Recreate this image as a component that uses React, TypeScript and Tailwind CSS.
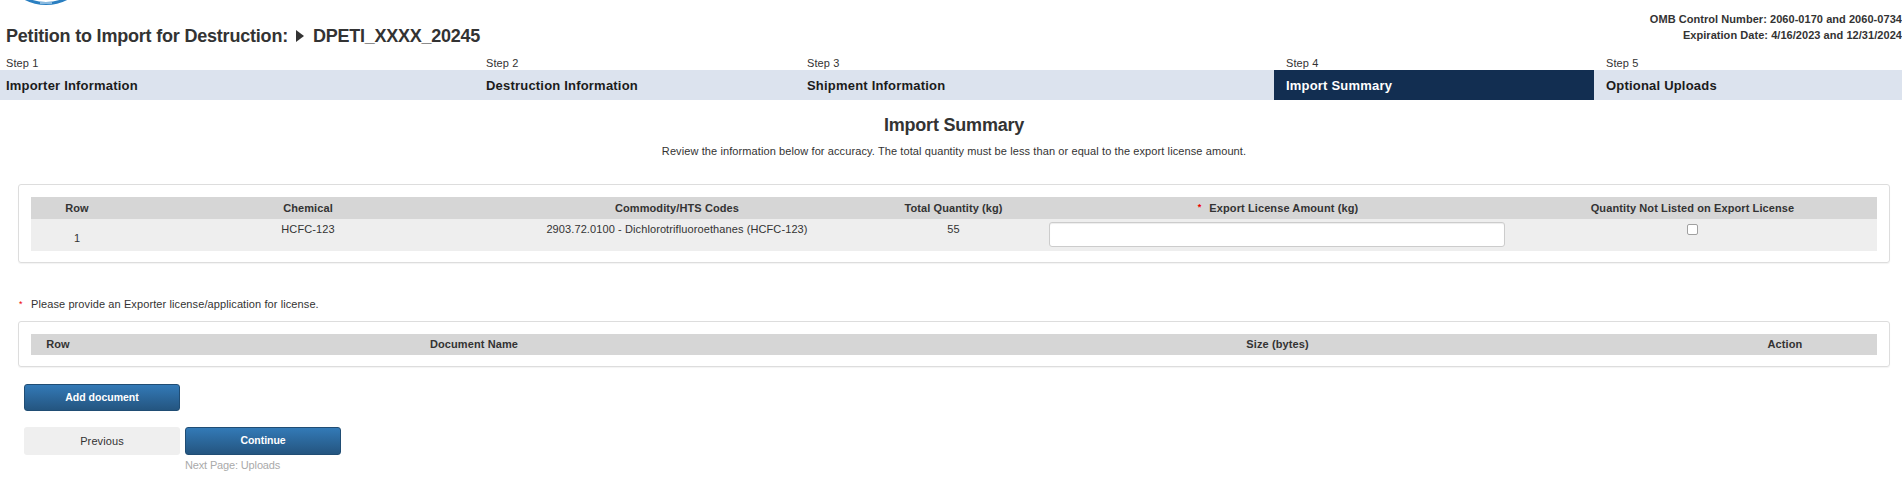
import React from "react";

const steps = [
  { n: "Step 1", t: "Importer Information", w: "w-[480px]", pad: "pl-[6px]" },
  { n: "Step 2", t: "Destruction Information", w: "w-[321px]", pad: "pl-[6px]" },
  { n: "Step 3", t: "Shipment Information", w: "w-[473px]", pad: "pl-[6px]" },
  { n: "Step 4", t: "Import Summary", w: "w-[320px]", pad: "pl-[12px]", active: true },
  { n: "Step 5", t: "Optional Uploads", w: "flex-1", pad: "pl-[12px]" },
];

const blue = "bg-gradient-to-b from-[#337ab7] to-[#245580] border border-[#204d74] text-white font-bold";
const th = "h-[22px] bg-[#d6d6d6] flex items-center justify-center";
const td = "h-[32px] bg-[#eee] leading-[14px]";

export default function App() {
  return (
    <div className="w-[1902px] h-[495px] overflow-hidden bg-white text-[#333] text-[11px] tracking-[0.1px] font-['Liberation_Sans',Arial,sans-serif]">
      <div className="relative h-[56px] flex justify-between items-start">
        <svg className="absolute left-0 top-0" width="90" height="8" viewBox="0 0 90 8">
          <circle cx="46" cy="-41" r="44.5" fill="#fff" stroke="#2a7fc1" strokeWidth="3" />
          <path d="M40 3h12" stroke="#a9cde8" strokeWidth="1.5" />
        </svg>
        <h1 className="mt-[25px] ml-[6px] text-[18px] leading-[22px] font-bold tracking-[-0.2px] flex items-center">
          <span>Petition to Import for Destruction:</span>
          <svg className="ml-[8px] mr-[9px]" width="8" height="12" viewBox="0 0 8 12"><path d="M0 0l8 6-8 6z" fill="#333" /></svg>
          <span className="tracking-[-0.25px]">DPETI_XXXX_20245</span>
        </h1>
        <div className="mt-[11px] text-right leading-[16px] font-bold tracking-[0.05px]">
          <div>OMB Control Number: 2060-0170 and 2060-0734</div>
          <div>Expiration Date: 4/16/2023 and 12/31/2024</div>
        </div>
      </div>

      <div className="flex">
        {steps.map((s) => (
          <div key={s.n} className={s.w}>
            <div className={`h-[14px] leading-[14px] ${s.pad}`}>{s.n}</div>
            <div className={`h-[30px] pt-[2px] flex items-center text-[13px] tracking-[0.2px] font-bold ${s.pad} ${s.active ? "bg-[#122e51] text-white" : "bg-[#dce3ee] text-[#1b1b1b]"}`}>{s.t}</div>
          </div>
        ))}
      </div>

      <div className="pl-[6px] text-center">
        <h2 className="mt-[14px] text-[18px] leading-[22px] font-bold tracking-[-0.2px]">Import Summary</h2>
        <p className="mt-[8px] leading-[14px]">Review the information below for accuracy. The total quantity must be less than or equal to the export license amount.</p>
      </div>

      <section className="mt-[26px] mx-[18px] w-[1872px] h-[79px] border border-[#ddd] rounded-[3px] p-[12px] shadow-[0_1px_1px_rgba(0,0,0,0.05)]">
        <div className="grid grid-cols-[92px_368px_372px_180px_468px_366px] text-center">
          <div className={`${th} font-bold`}>Row</div>
          <div className={`${th} font-bold pl-[2px]`}>Chemical</div>
          <div className={`${th} font-bold`}>Commodity/HTS Codes</div>
          <div className={`${th} font-bold pl-[1px]`}>Total Quantity (kg)</div>
          <div className={`${th} font-bold pl-[2px]`}><span className="text-[#e00] text-[9px] mr-[8px]">*</span>Export License Amount (kg)</div>
          <div className={`${th} font-bold pr-[3px]`}>Quantity Not Listed on Export License</div>
          <div className={`${td} pt-[12px]`}>1</div>
          <div className={`${td} pt-[3px] pl-[2px]`}>HCFC-123</div>
          <div className={`${td} pt-[3px]`}>2903.72.0100 - Dichlorotrifluoroethanes (HCFC-123)</div>
          <div className={`${td} pt-[3px] pl-[1px]`}>55</div>
          <div className={`${td} pt-[3px] px-[6px]`}>
            <input type="text" aria-label="Export License Amount" className="block w-full h-[25px] bg-white border border-[#ccc] rounded-[3px] shadow-[inset_0_1px_1px_rgba(0,0,0,0.075)]" />
          </div>
          <div className={`${td} pt-[5px] pr-[3px] flex justify-center`}>
            <span className="w-[11px] h-[11px] bg-white border border-[#a0a0a0] rounded-[2px]" />
          </div>
        </div>
      </section>

      <p className="mt-[34px] ml-[19px] leading-[14px] flex"><span className="text-[#e00] text-[9px] w-[12px]">*</span>Please provide an Exporter license/application for license.</p>

      <section className="mt-[10px] mx-[18px] w-[1872px] h-[46px] border border-[#ddd] rounded-[3px] p-[12px] shadow-[0_1px_1px_rgba(0,0,0,0.05)]">
        <div className="grid grid-cols-[54px_778px_828px_186px] h-[21px] bg-[#d6d6d6] items-center font-bold text-center">
          <div>Row</div>
          <div>Document Name</div>
          <div className="pl-[1px]">Size (bytes)</div>
          <div className="pl-[2px]">Action</div>
        </div>
      </section>

      <button className={`block mt-[17px] ml-[24px] w-[156px] h-[27px] rounded-[3px] text-[10.5px] tracking-normal ${blue}`}>Add document</button>
      <div className="mt-[16px] ml-[24px] flex gap-[5px]">
        <button className="w-[156px] h-[28px] rounded-[3px] bg-[#efefef] text-[11px] tracking-[0.1px]">Previous</button>
        <div>
          <button className={`block w-[156px] h-[28px] rounded-[3px] text-[10.5px] tracking-[-0.05px] ${blue}`}>Continue</button>
          <div className="mt-[3px] leading-[14px] text-[#aaa] tracking-[-0.15px]">Next Page: Uploads</div>
        </div>
      </div>
    </div>
  );
}
